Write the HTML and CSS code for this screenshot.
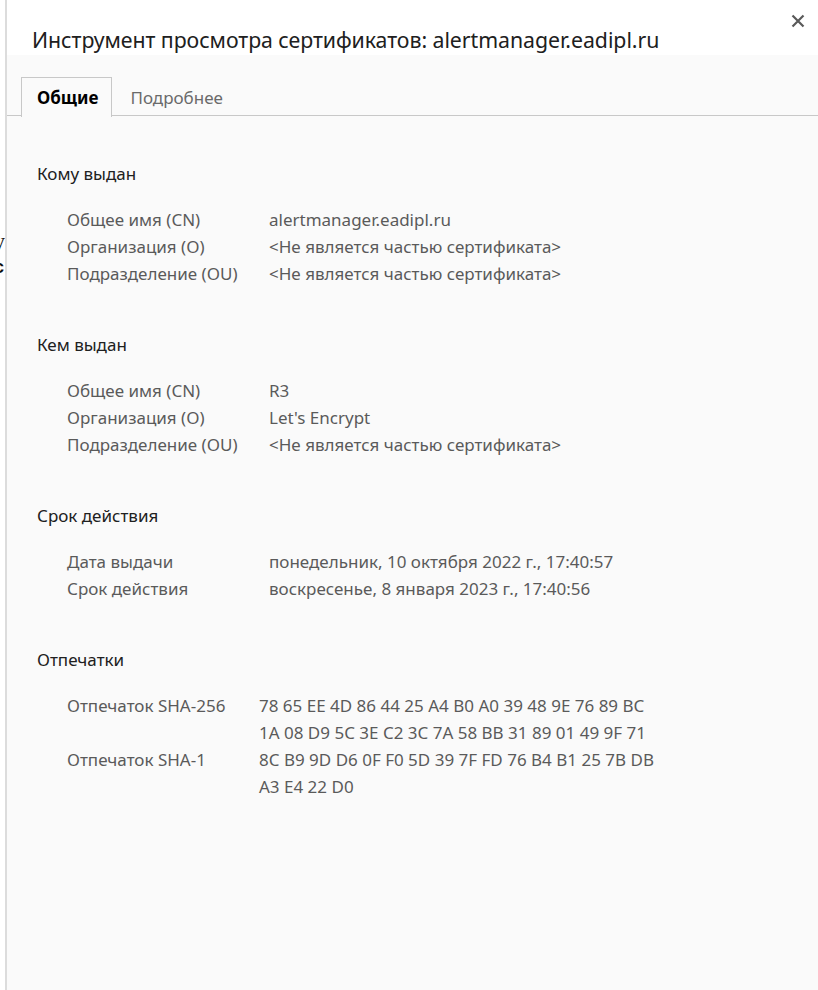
FILE: index.html
```html
<!DOCTYPE html>
<html lang="ru">
<head>
<meta charset="utf-8">
<title>Инструмент просмотра сертификатов</title>
<link rel="stylesheet" href="styles.css">
</head>
<body>
<div class="backdrop">
  <span class="bg-line bg-line1">у</span>
  <span class="bg-line bg-line2">с</span>
</div>
<div class="dialog">
  <div class="header">
    <h1 class="title">Инструмент просмотра сертификатов: alertmanager.eadipl.ru</h1>
    <button class="close" aria-label="Закрыть">
      <svg width="14" height="14" viewBox="0 0 14 14"><path d="M1.5 1.5 L12.5 12.5 M12.5 1.5 L1.5 12.5" stroke="#5a5a5a" stroke-width="2.2" fill="none"/></svg>
    </button>
  </div>
  <div class="body">
    <div class="tabs">
      <div class="tab active">Общие</div>
      <div class="tab">Подробнее</div>
    </div>
    <div class="content">
      <section class="section">
        <h2 class="sec-title">Кому выдан</h2>
        <div class="grid">
          <div class="label">Общее имя (CN)</div><div class="value">alertmanager.eadipl.ru</div>
          <div class="label">Организация (O)</div><div class="value">&lt;Не является частью сертификата&gt;</div>
          <div class="label">Подразделение (OU)</div><div class="value">&lt;Не является частью сертификата&gt;</div>
        </div>
      </section>
      <section class="section">
        <h2 class="sec-title">Кем выдан</h2>
        <div class="grid">
          <div class="label">Общее имя (CN)</div><div class="value">R3</div>
          <div class="label">Организация (O)</div><div class="value">Let's Encrypt</div>
          <div class="label">Подразделение (OU)</div><div class="value">&lt;Не является частью сертификата&gt;</div>
        </div>
      </section>
      <section class="section">
        <h2 class="sec-title">Срок действия</h2>
        <div class="grid">
          <div class="label">Дата выдачи</div><div class="value">понедельник, 10 октября 2022 г., 17:40:57</div>
          <div class="label">Срок действия</div><div class="value">воскресенье, 8 января 2023 г., 17:40:56</div>
        </div>
      </section>
      <section class="section">
        <h2 class="sec-title">Отпечатки</h2>
        <div class="grid grid-fp">
          <div class="label">Отпечаток SHA-256</div><div class="value fp">78 65 EE 4D 86 44 25 A4 B0 A0 39 48 9E 76 89 BC<br>1A 08 D9 5C 3E C2 3C 7A 58 BB 31 89 01 49 9F 71</div>
          <div class="label">Отпечаток SHA-1</div><div class="value fp">8C B9 9D D6 0F F0 5D 39 7F FD 76 B4 B1 25 7B DB<br>A3 E4 22 D0</div>
        </div>
      </section>
    </div>
  </div>
</div>
</body>
</html>
```

FILE: styles.css
```css
* { box-sizing: border-box; }
html, body { margin: 0; padding: 0; height: 100%; }
body {
  background: #ffffff;
  font-family: "Noto Sans", "Open Sans", sans-serif;
  overflow: hidden;
  position: relative;
}
.backdrop {
  position: absolute;
  left: -6px;
  top: 228px;
  font-family: "Liberation Serif", serif;
  font-size: 22px;
  color: #111;
}
.bg-line { display: block; line-height: 26px; }
.bg-line2 { font-family: "Liberation Sans", sans-serif; font-weight: bold; font-size: 18px; }
.dialog {
  position: absolute;
  left: 5px;
  top: 0;
  right: 0;
  bottom: 0;
  border-left: 2px solid #dcdcdc;
  background: #fafafa;
  display: flex;
  flex-direction: column;
}
.header {
  background: #ffffff;
  height: 55px;
  position: relative;
  padding: 25px 0 0 25px;
}
.title {
  margin: 0;
  font-weight: normal;
  font-size: 21.3px;
  line-height: 30px;
  color: #202020;
  letter-spacing: -0.05px;
}
.close {
  position: absolute;
  top: 13px;
  right: 12px;
  width: 16px;
  height: 16px;
  padding: 0;
  border: 0;
  background: transparent;
  display: flex;
  align-items: center;
  justify-content: center;
}
.body { flex: 1; }
.tabs {
  margin-top: 22px;
  display: flex;
  padding-left: 14px;
  border-bottom: 1px solid #c8c8c8;
  height: 39px;
}
.tab {
  padding: 0 16px 0 17px;
  font-size: 17px;
  line-height: 40px;
  color: #6a6a6a;
  border: 1px solid transparent;
  border-bottom: 0;
}
.tab.active {
  color: #000;
  font-weight: bold;
  border-color: #c8c8c8;
  background: #fafafa;
  margin-bottom: -1px;
  height: 40px;
  padding: 0 13px 0 15px;
}
.content { padding: 44px 0 0 30px; }
.section { margin-bottom: 44px; }
.sec-title {
  margin: 0 0 19px 0;
  font-weight: normal;
  font-size: 17px;
  line-height: 27px;
  color: #202020;
}
.grid {
  display: grid;
  grid-template-columns: 202px auto;
  padding-left: 30px;
  font-size: 17px;
  line-height: 27px;
  color: #5a5a5a;
}
.grid-fp { grid-template-columns: 192px auto; }
.label, .value { white-space: nowrap; }
```
